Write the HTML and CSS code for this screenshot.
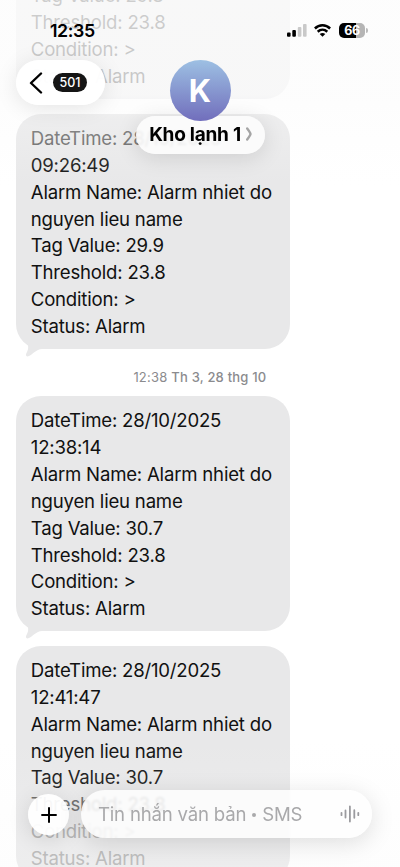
FILE: index.html
```html
<!DOCTYPE html>
<html lang="vi">
<head>
<meta charset="utf-8">
<title>Kho lạnh 1</title>
<link rel="stylesheet" href="styles.css">
</head>
<body>
<div class="phone">
  <main class="thread">
    <div class="bubble old">DateTime: 28/10/2025<br>09:23:10<br>Alarm Name: Alarm nhiet do<br>nguyen lieu name<br>Tag Value: 29.8<br>Threshold: 23.8<br>Condition: &gt;<br>Status: Alarm</div>
    <div class="bubble first"><span class="fade-one">DateTime: 28/10/2025</span><br>09:26:49<br>Alarm Name: Alarm nhiet do<br>nguyen lieu name<br>Tag Value: 29.9<br>Threshold: 23.8<br>Condition: &gt;<br>Status: Alarm
      <svg class="tail" viewBox="0 0 28 22"><path d="M10 8C13 13.500 9.500 17 9 19.500C8.800 21.500 10.500 21.800 12 21C16 19 19 14.500 25 14L28 8Z"/></svg>
    </div>
    <p class="stamp">12:38 <b>Th 3, 28 thg 10</b></p>
    <div class="bubble">DateTime: 28/10/2025<br>12:38:14<br>Alarm Name: Alarm nhiet do<br>nguyen lieu name<br>Tag Value: 30.7<br>Threshold: 23.8<br>Condition: &gt;<br>Status: Alarm
      <svg class="tail" viewBox="0 0 28 22"><path d="M10 8C13 13.500 9.500 17 9 19.500C8.800 21.500 10.500 21.800 12 21C16 19 19 14.500 25 14L28 8Z"/></svg>
    </div>
    <div class="bubble last">DateTime: 28/10/2025<br>12:41:47<br>Alarm Name: Alarm nhiet do<br>nguyen lieu name<br>Tag Value: 30.7<br><span class="fade-two">Threshold: 23.8</span><br><span class="fade-three">Condition: &gt;</span><br><span class="fade-four">Status: Alarm</span></div>
  </main>

  <header class="top">
    <div class="status">
      <span class="clock">12:35</span>
      <svg class="signal" viewBox="0 0 20 13"><g fill="#000"><rect x="0" y="8.500" width="3.600" height="4.200" rx="1"/><rect x="5.300" y="6" width="3.600" height="6.700" rx="1"/></g><g fill="#c9c9c9"><rect x="10.800" y="3" width="3.600" height="9.700" rx="1"/><rect x="16" y="0" width="3.600" height="12.700" rx="1"/></g></svg>
      <svg class="wifi" viewBox="0 0 17 13"><g fill="none" stroke="#000" stroke-width="2.500"><path d="M.9 4.500C5.200.300 11.800.300 16.100 4.500"/><path d="M3.700 7.700C6.500 5.200 10.500 5.200 13.300 7.700"/></g><path d="M5.700 10C7.400 8.500 9.600 8.500 11.300 10L8.500 12.800Z"/></svg>
      <span class="battery">66</span>
      <span class="nub"></span>
    </div>
    <div class="nav">
      <div class="back">
        <svg viewBox="0 0 14 22"><path d="M12 1.500L2 11L12 20.500"/></svg>
        <span class="count">501</span>
      </div>
      <div class="contact">
        <div class="avatar">K</div>
        <div class="name"><span>Kho lạnh 1</span><svg viewBox="0 0 6 14"><path d="M1.200 1.500C3.800 5 4.500 6 4.500 7S3.800 9 1.200 12.500"/></svg></div>
      </div>
    </div>
  </header>

  <footer class="composer">
    <div class="plus"><svg viewBox="0 0 16 16"><path d="M8 .3V15.700M.3 8H15.700"/></svg></div>
    <div class="field">
      <span>Tin nhắn văn bản <i class="dot"></i> SMS</span>
      <svg viewBox="0 0 20 18"><path d="M1.500 7.800V10.200M5.500 5.500V12.500M9.900 1.500V16.500M14.300 5.200V12.800M18.300 7.800V10.200"/></svg>
    </div>
  </footer>
</div>
</body>
</html>
```
FILE: styles.css
```css
* { box-sizing: border-box; }
body { margin: 0; background: #fff; }
.phone {
  position: relative;
  height: 867px;
  overflow: hidden;
  background: #fff;
  font-family: Inter, "Noto Sans", sans-serif;
  color: #111;
}
.thread {
  display: flex;
  flex-direction: column;
  align-items: flex-start;
  margin-top: -136px;
  padding-left: 16.4px;
}
.bubble {
  position: relative;
  flex: none;
  width: 273.6px;
  height: 235px;
  padding: 11px 0 0 14.4px;
  border-radius: 25px;
  background: #e8e8e9;
  font-size: 18.6px;
  line-height: 26.85px;
  letter-spacing: -0.21px;
  white-space: nowrap;
}
.first { margin-top: 15px; height: 235.4px; }
.last { margin-top: 14.6px; }
.fade-one { color: #5c5c5c; }
.fade-two { color: #5c5c5c; }
.fade-three { color: #a2a2a2; }
.fade-four { color: #a6a6a6; }
.tail {
  position: absolute;
  left: 1px;
  bottom: -8px;
  width: 28px;
  height: 22px;
  fill: #e8e8e9;
}
.stamp {
  width: 367px;
  height: 47px;
  margin: 0;
  padding-top: 19px;
  text-align: center;
  font-size: 13px;
  line-height: 18px;
  letter-spacing: 0.2px;
  color: #8b8b8e;
}
.stamp b { font-weight: 500; }
.top {
  position: absolute;
  inset: 0 0 auto;
  height: 185px;
  background: linear-gradient(rgba(252,252,252,.8) 0, rgba(252,252,252,.77) 95px, rgba(250,250,250,.3) 118px, rgba(252,252,252,0) 185px);
}
.status {
  display: flex;
  align-items: center;
  height: 60px;
  padding-left: 50px;
}
.clock {
  width: 237px;
  font-size: 17.8px;
  font-weight: 600;
  letter-spacing: -0.4px;
  color: #000;
}
.signal { width: 20px; height: 13px; }
.wifi { width: 17px; height: 13px; margin-left: 7px; }
.battery {
  width: 26px;
  height: 15px;
  margin-left: 8px;
  border-radius: 5px;
  background: linear-gradient(90deg, #000 66%, #b5b5b5 66%);
  color: #fff;
  font-size: 12.5px;
  font-weight: 700;
  line-height: 15px;
  text-align: center;
  letter-spacing: -0.4px;
}
.nub {
  width: 2px;
  height: 5px;
  margin-left: 1px;
  border-radius: 0 2px 2px 0;
  background: #bbb;
}
.nav {
  display: grid;
  grid-template-columns: 1fr 130px 1fr;
  align-items: start;
}
.back {
  display: flex;
  align-items: center;
  width: 89px;
  height: 45px;
  margin-left: 16px;
  padding-left: 13px;
  border-radius: 23px;
  background: rgba(255,255,255,.96);
  box-shadow: 0 3px 22px rgba(0,0,0,.1);
}
.back svg {
  width: 14px;
  height: 22px;
  fill: none;
  stroke: #000;
  stroke-width: 2.4;
  stroke-linecap: round;
  stroke-linejoin: round;
}
.count {
  width: 34px;
  height: 19px;
  margin-left: 10px;
  border-radius: 10px;
  background: #151515;
  color: #fff;
  font-size: 12.5px;
  font-weight: 500;
  line-height: 19px;
  text-align: center;
}
.contact {
  display: flex;
  flex-direction: column;
  align-items: center;
}
.avatar {
  z-index: 1;
  width: 61px;
  height: 61px;
  border-radius: 50%;
  background: linear-gradient(#9dc0e3, #716ebc);
  color: #fff;
  font-size: 31px;
  font-weight: 700;
  line-height: 62px;
  text-align: center;
}
.name {
  display: flex;
  align-items: center;
  justify-content: center;
  gap: 5px;
  width: 129px;
  height: 38px;
  margin-top: -5px;
  padding: 0 0 2px 1px;
  border-radius: 19px;
  background: rgba(253,253,253,.88);
  -webkit-backdrop-filter: blur(1px);
  backdrop-filter: blur(1px);
  box-shadow: 0 4px 22px rgba(0,0,0,.12);
  color: #000;
  font-size: 19px;
  font-weight: 700;
  letter-spacing: -0.25px;
  white-space: nowrap;
}
.name svg {
  width: 6px;
  height: 14px;
  fill: none;
  stroke: #a5a5a5;
  stroke-width: 2.4;
  stroke-linecap: round;
}
.composer {
  position: absolute;
  inset: auto 0 0;
  display: flex;
  align-items: flex-start;
  gap: 12px;
  height: 127px;
  padding: 50px 28px 0;
  background: linear-gradient(rgba(249,249,249,0), rgba(249,249,249,.3));
}
.plus {
  display: grid;
  place-items: center;
  width: 41px;
  height: 41px;
  margin-top: 4px;
  border-radius: 50%;
  background: rgba(255,255,255,.94);
  box-shadow: 0 4px 22px rgba(0,0,0,.12);
}
.plus svg {
  width: 16px;
  height: 16px;
  stroke: #000;
  stroke-width: 2;
}
.field {
  display: flex;
  align-items: center;
  justify-content: space-between;
  width: 291px;
  height: 48px;
  padding: 0 12px 0 17px;
  border-radius: 24px;
  background: rgba(254,254,254,.84);
  -webkit-backdrop-filter: blur(1.2px);
  backdrop-filter: blur(1.2px);
  box-shadow: 0 5px 24px rgba(0,0,0,.13);
  color: #a9a9ab;
  font-size: 18.6px;
  letter-spacing: -0.2px;
  white-space: nowrap;
}
.dot {
  display: inline-block;
  width: 4px;
  height: 4px;
  margin: 0 1px;
  border-radius: 50%;
  background: #a9a9ab;
  vertical-align: 4px;
}
.field svg {
  width: 20px;
  height: 18px;
  fill: none;
  stroke: #9b9b9f;
  stroke-width: 1.8;
  stroke-linecap: round;
}
```
